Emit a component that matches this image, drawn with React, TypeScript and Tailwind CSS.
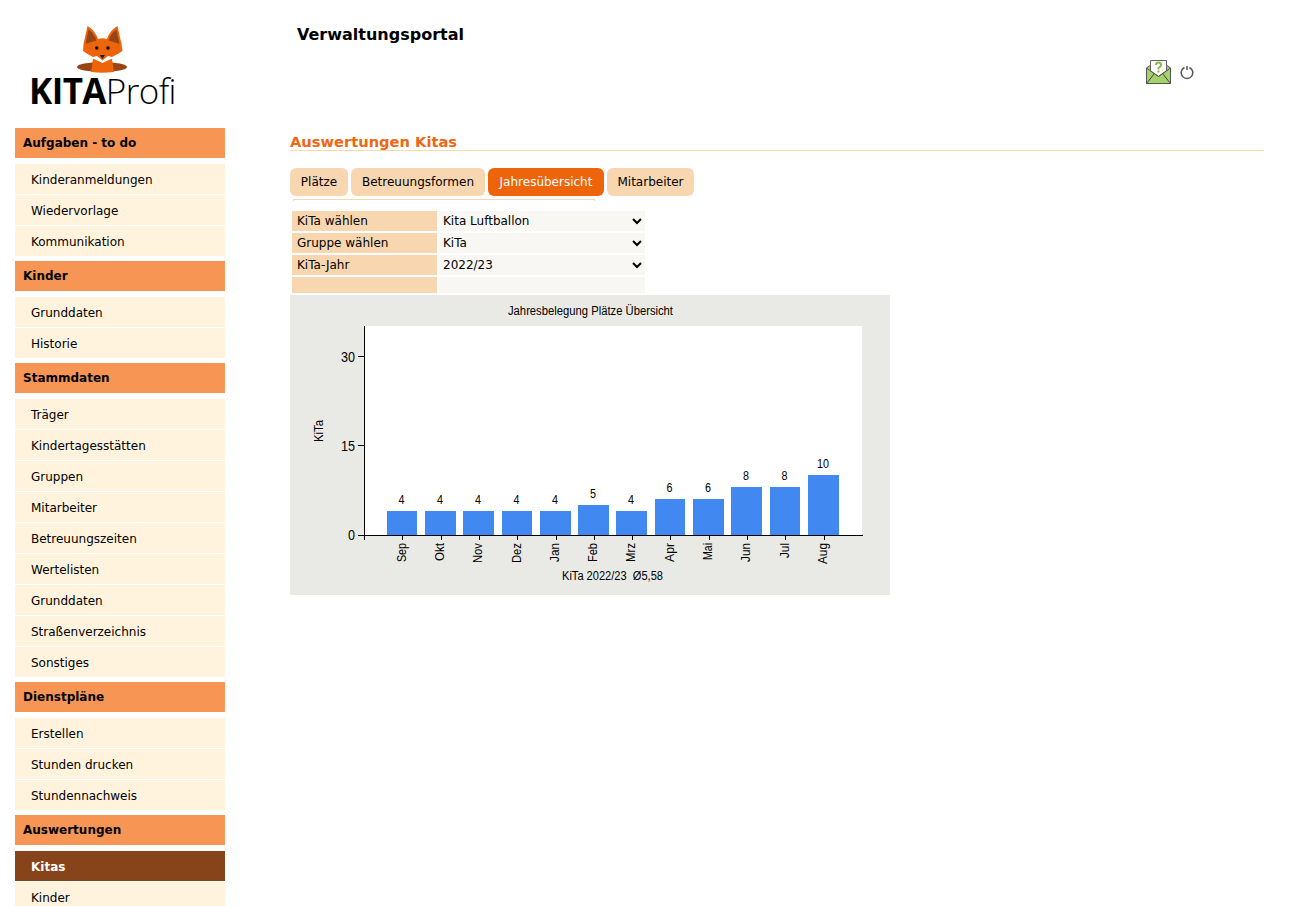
const sections = [
  { title: "Aufgaben - to do", items: ["Kinderanmeldungen", "Wiedervorlage", "Kommunikation"] },
  { title: "Kinder", items: ["Grunddaten", "Historie"] },
  { title: "Stammdaten", items: ["Träger", "Kindertagesstätten", "Gruppen", "Mitarbeiter", "Betreuungszeiten", "Wertelisten", "Grunddaten", "Straßenverzeichnis", "Sonstiges"] },
  { title: "Dienstpläne", items: ["Erstellen", "Stunden drucken", "Stundennachweis"] },
  { title: "Auswertungen", items: ["Kitas", "Kinder"] },
];

const bars: [string, number, number, number, number, number][] = [
  ["Sep", 4, 387, 417, 511, 19],
  ["Okt", 4, 425, 456, 511, 18],
  ["Nov", 4, 463, 494, 511, 20],
  ["Dez", 4, 502, 532, 511, 20],
  ["Jan", 4, 540, 571, 511, 19],
  ["Feb", 5, 578, 609, 505, 19],
  ["Mrz", 4, 616, 647, 511, 19],
  ["Apr", 6, 655, 685, 499, 19],
  ["Mai", 6, 693, 724, 499, 17],
  ["Jun", 8, 731, 762, 487, 19],
  ["Jul", 8, 770, 800, 487, 15],
  ["Aug", 10, 808, 839, 475, 21],
];

function Fox() {
  return (
    <svg width="80" height="65" viewBox="0 0 80 65" className="block">
      <ellipse cx="42" cy="52" rx="25" ry="5" fill="#974514" />
      <path d="M33 44 L52 44 L54 57 Q42 58.500 31 57 Z" fill="#ee640b" />
      <path d="M23.500 29 L27.500 11 Q35 15 38 24 Q42.500 22.500 47 24 Q50 15 57.500 11 L61.500 29 L62.500 36 Q58 39 52 42 L42.500 46 L33 42 Q27 39 23 36 Z" fill="#ee640b" />
      <path d="M25.500 29 L28.500 14.500 Q34 18 36.500 25.500 Q30 27 25.500 29 Z" fill="#974514" />
      <path d="M59.500 29 L56.500 14.500 Q51 18 48.500 25.500 Q55 27 59.500 29 Z" fill="#974514" />
      <path d="M33 42 L37 41 L42.500 45.500 L48 41 L52 42 L52 43.500 L42.500 48 L33 43.500 Z" fill="#fff" />
      <circle cx="36.700" cy="33" r="1.800" fill="#111" />
      <circle cx="48" cy="33" r="1.800" fill="#111" />
      <path d="M39.800 40 L45 40 L42.400 44 Z" fill="#222" />
    </svg>
  );
}

function Logo() {
  return (
    <div className="h-[128px] pl-[15px]">
      <div className="pl-[45px] pt-[15px] h-[69px]">
        <Fox />
      </div>
      <div className="pl-[14px] flex items-baseline text-black text-[35px] leading-[44px] font-['Open_Sans',sans-serif] tracking-[-0.6px]">
        <span className="font-bold">KITA</span>
        <span className="font-light">Profi</span>
      </div>
    </div>
  );
}

function Sidebar() {
  return (
    <aside className="w-[210px] ml-[15px] shrink-0">
      <div className="-ml-[15px]">
        <Logo />
      </div>
      {sections.map((s) => (
        <div key={s.title} className="mb-[5px]">
          <div className="h-[30px] bg-[#f79654] pl-2 flex items-center font-bold text-[12px] text-black">
            {s.title}
          </div>
          <div className="mt-[6px] flex flex-col gap-px">
            {s.items.map((i) =>
              i === "Kitas" ? (
                <div key={i} className="h-[30px] bg-[#87431a] pl-4 pt-[1px] flex items-center font-bold text-[12px] text-white">
                  {i}
                </div>
              ) : (
                <div key={i} className="h-[30px] bg-[#fff3dd] pl-4 pt-[1px] flex items-center text-[12px] text-black">
                  {i}
                </div>
              )
            )}
          </div>
        </div>
      ))}
    </aside>
  );
}

function Chart() {
  return (
    <svg width="600" height="300" viewBox="290 295 600 300" className="block" fontFamily="'Liberation Sans', Arial, sans-serif" fill="#000">
      <rect x="290" y="295" width="600" height="300" fill="#e9e9e5" />
      <rect x="364" y="326" width="498" height="209" fill="#fff" />
      <text x="508" y="315" fontSize="12" textLength="165" lengthAdjust="spacingAndGlyphs">Jahresbelegung Plätze Übersicht</text>
      {bars.map(([m, v, x1, x2, top, len]) => {
        const cx = (x1 + x2) / 2;
        const w = v > 9 ? 12 : 6;
        return (
          <g key={m}>
            <rect x={x1} y={top} width={x2 - x1} height={535 - top} fill="#4189f0" />
            <text x={cx - w / 2 - 0.5} y={top - 7} fontSize="12" textLength={w} lengthAdjust="spacingAndGlyphs">{v}</text>
            <line x1={Math.round(cx) + 0.5} x2={Math.round(cx) + 0.5} y1="535" y2="540" stroke="#000" />
            <text transform={`translate(${cx + 3.5} ${543 + len}) rotate(-90)`} fontSize="12" textLength={len} lengthAdjust="spacingAndGlyphs">{m}</text>
          </g>
        );
      })}
      <line x1="364.500" x2="364.500" y1="326" y2="540" stroke="#000" />
      <line x1="358" x2="863" y1="535.500" y2="535.500" stroke="#000" />
      <line x1="358" x2="364" y1="356.500" y2="356.500" stroke="#000" />
      <line x1="358" x2="364" y1="445.500" y2="445.500" stroke="#000" />
      <text x="341" y="362" fontSize="14" textLength="14" lengthAdjust="spacingAndGlyphs">30</text>
      <text x="341" y="451" fontSize="14" textLength="14" lengthAdjust="spacingAndGlyphs">15</text>
      <text x="348" y="540" fontSize="14" textLength="7" lengthAdjust="spacingAndGlyphs">0</text>
      <text transform="translate(323 442) rotate(-90)" fontSize="12" textLength="22" lengthAdjust="spacingAndGlyphs">KiTa</text>
      <text x="562" y="580" fontSize="12" textLength="101" lengthAdjust="spacingAndGlyphs" xmlSpace="preserve">KiTa 2022/23  Ø5,58</text>
    </svg>
  );
}

function Envelope() {
  return (
    <svg width="26" height="26" viewBox="0 0 26 26" className="block">
      <path d="M0.500 8 L4 5.500 H21 L24.500 8 V23.500 H0.500 Z" fill="#a5d36a" stroke="#555" strokeWidth="1" />
      <path d="M4.500 0.500 H20.500 V11 L12.500 16.500 L4.500 11 Z" fill="#fff" stroke="#666" strokeWidth="1" />
      <path d="M0.500 23.500 L8.500 13.500 M24.500 23.500 L16.500 13.500" stroke="#444" strokeWidth="1" />
      <path d="M0.500 8 L12.500 16.500 L24.500 8" fill="none" stroke="#555" strokeWidth="1" />
      <path d="M10 5 Q10 2.500 12.500 2.500 Q15 2.500 15 5 Q15 6.500 12.500 8 V9.500" fill="none" stroke="#86bb46" strokeWidth="2" />
      <rect x="11.500" y="10.500" width="2" height="2" fill="#86bb46" />
    </svg>
  );
}

function Power() {
  return (
    <svg width="14" height="16" viewBox="0 0 14 16" className="block">
      <path d="M4.500 2.500 A5.800 5.800 0 1 0 9.500 2.500" fill="none" stroke="#555" strokeWidth="1.500" />
      <line x1="7" y1="1" x2="7" y2="5" stroke="#555" strokeWidth="1.500" />
    </svg>
  );
}

const rows: [string, string[]][] = [
  ["KiTa wählen", ["Kita Luftballon"]],
  ["Gruppe wählen", ["KiTa"]],
  ["KiTa-Jahr", ["2022/23"]],
];

export default function App() {
  return (
    <div className="h-[906px] overflow-hidden flex bg-white font-['DejaVu_Sans',Verdana,sans-serif] text-black">
      <Sidebar />
      <main className="ml-[65px] w-[974px] shrink-0">
        <div className="h-[128px]">
          <h1 className="pl-[7px] pt-[25px] text-[16px] leading-[20px] font-bold">Verwaltungsportal</h1>
          <div className="flex items-start justify-end pt-[15px] pr-[70px]">
            <Envelope />
            <div className="ml-[8px] mt-[5px]"><Power /></div>
          </div>
        </div>
        <h2 className="h-[23px] border-b border-[#fbd9a8] text-[#ef6711] font-bold text-[14.67px] leading-[28px]">Auswertungen Kitas</h2>
        <div className="flex gap-[3px] mt-[17px] text-[12px]">
          <div className="h-[28px] w-[58px] rounded-[6px] bg-[#f8d7b0] flex items-center justify-center">Plätze</div>
          <div className="h-[28px] w-[134px] rounded-[6px] bg-[#f8d7b0] flex items-center justify-center">Betreuungsformen</div>
          <div className="h-[28px] w-[116px] rounded-[6px] bg-[#ee640b] text-white flex items-center justify-center">Jahresübersicht</div>
          <div className="h-[28px] w-[87px] rounded-[6px] bg-[#f8d7b0] flex items-center justify-center">Mitarbeiter</div>
        </div>
        <div className="ml-[3px] mt-[3px] w-[302px] h-[2px] border border-b-0 border-[#f8d7b0]" />
        <div className="ml-[2px] mt-[10px] grid grid-cols-[145px_206px] gap-x-[2px] gap-y-[2px] w-[353px] text-[12px]">
          {rows.map(([l, opts]) => (
            <div key={l} className="contents">
              <div className="h-[20px] bg-[#f8d7b0] pl-[5px] flex items-center">{l}</div>
              <select className="h-[20px] w-full bg-[#f8f7f3] text-[12px] font-['DejaVu_Sans',Verdana,sans-serif]" defaultValue={opts[0]}>
                {opts.map((o) => <option key={o}>{o}</option>)}
              </select>
            </div>
          ))}
          <div className="h-[16px] bg-[#f8d7b0]" />
          <div className="h-[16px] bg-[#f8f7f3]" />
        </div>
        <div className="mt-[2px]">
          <Chart />
        </div>
      </main>
    </div>
  );
}
